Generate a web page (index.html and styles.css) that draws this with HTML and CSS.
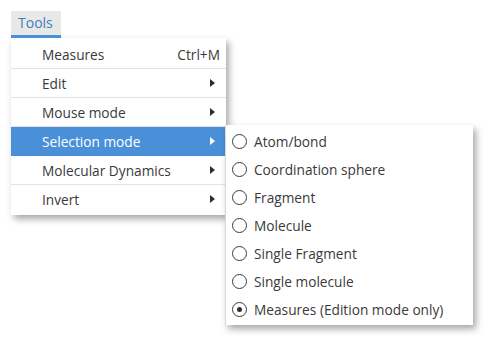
FILE: index.html
```html
<!DOCTYPE html>
<html lang="en">
<head>
  <meta charset="UTF-8">
  <title>Tools menu</title>
  <link rel="stylesheet" href="styles.css">
</head>
<body>

  <div class="screen">
    <div class="menubar">
      <span class="menubar-item">Tools</span>
    </div>

    <div class="menu">
      <div class="menu-row"><span>Measures</span><span class="shortcut">Ctrl+M</span></div>
      <div class="menu-row"><span>Edit</span><span class="arrow"></span></div>
      <div class="menu-row"><span>Mouse mode</span><span class="arrow"></span></div>
      <div class="menu-row active"><span>Selection mode</span><span class="arrow"></span></div>
      <div class="menu-row"><span>Molecular Dynamics</span><span class="arrow"></span></div>
      <div class="menu-row last"><span>Invert</span><span class="arrow"></span></div>
    </div>

    <!-- submenu opened from "Selection mode" -->
    <div class="submenu">
      <div class="sub-row"><span class="radio"></span>Atom/bond</div>
      <div class="sub-row"><span class="radio"></span>Coordination sphere</div>
      <div class="sub-row"><span class="radio"></span>Fragment</div>
      <div class="sub-row"><span class="radio"></span>Molecule</div>
      <div class="sub-row"><span class="radio"></span>Single Fragment</div>
      <div class="sub-row"><span class="radio"></span>Single molecule</div>
      <div class="sub-row"><span class="radio checked"></span>Measures (Edition mode only)</div>
    </div>
  </div>

</body>
</html>
```

FILE: styles.css
```css
body {
  margin: 0;
  padding: 0;
  background: #ffffff;
  font-family: "Open Sans", "Noto Sans", sans-serif;
  font-size: 13.7px;
  color: #3a3a3a;
}

.screen {
  position: relative;
  width: 492px;
  height: 344px;
  padding: 11px 0 0 11px;
  box-sizing: border-box;
}

.menubar {
  display: flex;
}

.menubar-item {
  background: #e8e8e7;
  color: #3d7fc6;
  padding: 0 8px 0 7px;
  height: 24px;
  line-height: 24px;
  border-bottom: 3px solid #4a90d9;
  font-size: 14px;
}

.menu {
  width: 215px;
  padding: 2px 0 2px;
  background: #ffffff;
  box-shadow: 3px 4px 7px rgba(0, 0, 0, 0.35);
}

.menu-row {
  display: flex;
  align-items: center;
  justify-content: space-between;
  height: 28px;
  padding: 0 11px 0 31px;
  border-bottom: 1px solid #e2e2e2;
}

.menu-row.last {
  border-bottom: none;
}

.menu-row.active {
  background: #4a90d9;
  border-bottom-color: #4a90d9;
  color: #ffffff;
}

.shortcut {
  color: #3a3a3a;
  margin-right: -5px;
}

.arrow {
  width: 0;
  height: 0;
  border-top: 4px solid transparent;
  border-bottom: 4px solid transparent;
  border-left: 5px solid #2e2e2e;
}

.menu-row.active .arrow {
  border-left-color: #ffffff;
}

.submenu {
  position: absolute;
  left: 225px;
  top: 125px;
  width: 247px;
  padding: 2px 0;
  background: #ffffff;
  border-left: 1px solid #d8d8d8;
  box-shadow: 3px 4px 7px rgba(0, 0, 0, 0.35);
}

.sub-row {
  display: flex;
  align-items: center;
  height: 28px;
  padding-left: 6px;
}

.radio {
  width: 13px;
  height: 13px;
  border: 1px solid #3a3a3a;
  border-radius: 50%;
  margin-right: 7px;
  display: flex;
  align-items: center;
  justify-content: center;
}

.radio.checked::after {
  content: "";
  width: 5px;
  height: 5px;
  border-radius: 50%;
  background: #2e2e2e;
}
```
